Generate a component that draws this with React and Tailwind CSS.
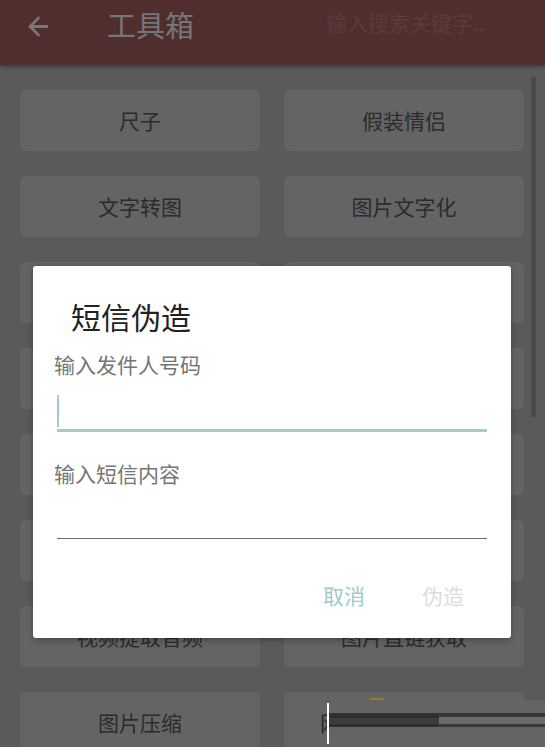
import React from "react";
import { ArrowLeft } from "lucide-react";

const tools = [
  ["尺子", "假装情侣"],
  ["文字转图", "图片文字化"],
  ["短信伪造", "图片拼接"],
  ["二维码生成", "二维码识别"],
  ["手持弹幕", "摩斯电码"],
  ["音频剪辑", "视频压缩"],
  ["视频提取音频", "图片直链获取"],
  ["图片压缩", "网络图片批量下载"],
];

function ToolCard({ label }) {
  return (
    <div className="h-[61px] rounded-[6px] bg-[#646464] flex items-center justify-center text-[21px] text-[#2b2b2b] whitespace-nowrap overflow-hidden">
      {label}
    </div>
  );
}

export default function App() {
  return (
    <div
      className="relative w-[545px] h-[747px] overflow-hidden bg-[#5a5a5a]"
      style={{ fontFamily: '"Noto Sans CJK SC", "Noto Sans", sans-serif' }}
    >
      {/* Toolbar */}
      <div className="relative z-10 h-[65px] bg-[#512e2e] flex items-start shadow-[0_2px_4px_rgba(0,0,0,0.35)]">
        <ArrowLeft className="ml-[24px] mt-[12px] text-[#777777]" size={29} strokeWidth={2.3} />
        <div className="ml-[54px] mt-[7px] text-[29px] leading-[34px] text-[#767676] whitespace-nowrap">工具箱</div>
        <div className="ml-[132px] mt-[8px] text-[21px] leading-[28px] text-[#5d3b3b] whitespace-nowrap">输入搜索关键字..</div>
      </div>

      {/* Tool list */}
      <div className="grid grid-cols-2 gap-x-[24px] gap-y-[25px] pl-[20px] pr-[21px] pt-[25px]">
        {tools.map(([a, b]) => (
          <React.Fragment key={a}>
            <ToolCard label={a} />
            <ToolCard label={b} />
          </React.Fragment>
        ))}
      </div>

      {/* Scrollbar */}
      <div className="absolute left-[531px] top-[77px] w-[5px] h-[340px] bg-[#4a4a4a]" />

      {/* Glitch strip at the bottom edge */}
      <div className="absolute left-[327px] top-[700px] right-0 bottom-0 bg-[#646464] flex">
        <div className="absolute left-[43px] -top-[2px] w-[15px] h-[2px] rounded-full bg-[#a0782c]" />
        <div className="mt-[3px] w-[2px] h-[41px] bg-white" />
        <div className="flex-1 flex flex-col pt-[13px]">
          <div className="h-[2px] bg-[#333333]" />
          <div className="flex h-[12px]">
            <div className="w-[110px] bg-[#3c3c3c] border-y-[3px] border-[#2f2f2f]" />
            <div className="flex-1 flex flex-col">
              <div className="h-[2px] bg-[#3a3a3a]" />
              <div className="flex-1 bg-[#6a6a6a]" />
              <div className="h-[3px] bg-[#3a3a3a]" />
            </div>
          </div>
        </div>
      </div>

      {/* Dialog */}
      <div className="absolute left-[33px] top-[266px] w-[478px] h-[372px] rounded-[3px] bg-white shadow-[0_2px_6px_rgba(0,0,0,0.3)] flex flex-col">
        <div className="mt-[30px] pl-[38px] h-[40px] leading-[40px] text-[30px] text-[#222222]">短信伪造</div>

        <div className="mt-[14px] pl-[21px] h-[28px] leading-[28px] text-[21px] text-[#757575]">输入发件人号码</div>
        <div className="mx-[24px] mt-[4px] h-[50px] pt-[13px] border-b-[3px] border-[#a1cdca]">
          <div className="w-[2px] h-[32px] bg-[#a1cdca]" />
        </div>

        <div className="mt-[27px] pl-[21px] h-[28px] leading-[28px] text-[21px] text-[#757575]">输入短信内容</div>
        <div className="mx-[24px] mt-[2px] h-[50px] border-b border-[#6b6b6b]" />

        <div className="mt-[42px] pr-[47px] flex justify-end gap-[57px] h-[28px] leading-[28px] text-[21px]">
          <span className="text-[#9ecbc8]">取消</span>
          <span className="text-[#dcdcdc]">伪造</span>
        </div>
      </div>
    </div>
  );
}
